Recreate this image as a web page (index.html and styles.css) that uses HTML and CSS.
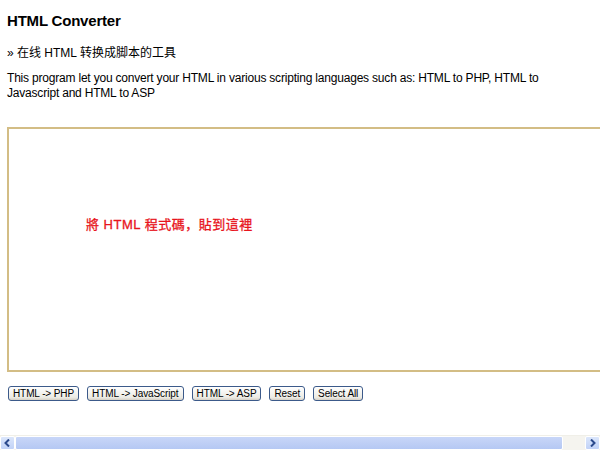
FILE: index.html
```html
<!DOCTYPE html>
<html lang="zh">
<head>
<meta charset="utf-8">
<title>HTML Converter</title>
<link rel="stylesheet" href="styles.css">
</head>
<body>
<div class="page">
  <div class="content">
    <h1 class="title">HTML Converter</h1>
    <p class="sub">» 在线 HTML 转换成脚本的工具</p>
    <p class="desc">This program let you convert your HTML in various scripting languages such as: HTML to PHP, HTML to Javascript and HTML to ASP</p>
    <div class="editor">
      <span class="hint">將 HTML 程式碼，貼到這裡</span>
    </div>
    <div class="buttons">
      <button class="btn">HTML -&gt; PHP</button>
      <button class="btn">HTML -&gt; JavaScript</button>
      <button class="btn">HTML -&gt; ASP</button>
      <button class="btn">Reset</button>
      <button class="btn">Select All</button>
    </div>
  </div>
  <div class="hscroll">
    <div class="arrow left"><svg width="7" height="8" viewBox="0 0 7 8"><path d="M5 0.5 L1.5 4 L5 7.5" fill="none" stroke="#2c4a8c" stroke-width="2"/></svg></div>
    <div class="thumb"></div>
    <div class="track"></div>
    <div class="arrow right"><svg width="7" height="8" viewBox="0 0 7 8"><path d="M2 0.5 L5.5 4 L2 7.5" fill="none" stroke="#2c4a8c" stroke-width="2"/></svg></div>
  </div>
</div>
</body>
</html>
```
FILE: styles.css
```css
html, body {
  margin: 0;
  padding: 0;
  overflow: hidden;
  background: #fff;
}
.page {
  width: 600px;
  height: 450px;
  display: flex;
  flex-direction: column;
  font-family: "Liberation Sans", Arial, "Noto Sans CJK TC", sans-serif;
  color: #000;
}
.content {
  padding: 0 0 0 7px;
  flex: 1;
  min-height: 0;
  overflow: hidden;
}
.title {
  margin: 12px 0 0;
  font-size: 15px;
  font-weight: bold;
  line-height: 18px;
  letter-spacing: -0.2px;
}
.sub {
  margin: 16px 0 0;
  font-size: 12px;
  line-height: 15px;
  font-family: "Liberation Sans", Arial, "Noto Sans CJK SC", sans-serif;
}
.desc {
  margin: 10px 0 0;
  font-size: 12px;
  line-height: 15px;
  width: 560px;
  letter-spacing: -0.2px;
}
.editor {
  margin-top: 26px;
  width: 640px;
  border: 2px solid #d3bd85;
  box-sizing: content-box;
  padding: 85px 0 0 77px;
  height: 156px;
}
.hint {
  color: #e8141c;
  font-size: 13px;
  font-weight: normal;
  letter-spacing: 0.5px;
  -webkit-text-stroke: 0.3px #e8141c;
  font-family: "Liberation Sans", Arial, "Noto Sans CJK TC", sans-serif;
}
.buttons {
  display: flex;
  gap: 8px;
  margin-top: 14px;
  padding-left: 1px;
}
.btn {
  font-family: "Liberation Sans", Arial, sans-serif;
  font-size: 10px;
  line-height: 12px;
  height: 15px;
  padding: 0 4px;
  letter-spacing: -0.1px;
  border: 1px solid #3c5a8a;
  border-radius: 3px;
  background: linear-gradient(#ffffff, #ecebe4 80%, #d6d0c5);
  color: #000;
}
.hscroll {
  height: 14px;
  display: flex;
  background: #f5f4ef;
  border-top: 1px solid #f0efe8;
}
.arrow {
  width: 15px;
  display: flex;
  align-items: center;
  justify-content: center;
  background: linear-gradient(#dbe6fb, #c1d2f7);
  border: 1px solid #fff;
  box-sizing: border-box;
  border-radius: 2px;
}
.thumb {
  width: 548px;
  background: linear-gradient(#c8d6f8, #b5c8f3);
  border: 1px solid #fff;
  box-sizing: border-box;
  border-radius: 2px;
}
.track {
  flex: 1;
}
```
